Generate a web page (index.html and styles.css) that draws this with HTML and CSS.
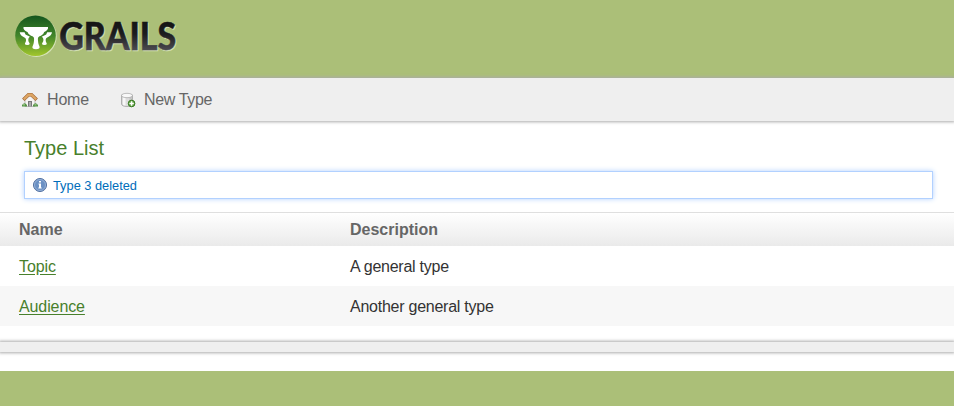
FILE: index.html
```
<!DOCTYPE html>
<html lang="en">
<head>
<meta charset="utf-8">
<title>Type List</title>
<link rel="stylesheet" href="styles.css">
</head>
<body>
<header class="banner">
  <svg class="logo" width="200" height="78" viewBox="0 0 200 78" role="img" aria-label="Grails">
    <defs>
      <linearGradient id="disc" x1="0" y1="0" x2="0" y2="1"><stop offset="0" stop-color="#14551d"/><stop offset=".5" stop-color="#41852a"/><stop offset="1" stop-color="#a2c62c"/></linearGradient>
      <linearGradient id="ink" gradientUnits="userSpaceOnUse" x1="0" y1="23" x2="0" y2="50"><stop offset="0" stop-color="#151515"/><stop offset=".4" stop-color="#1c1c1e"/><stop offset="1" stop-color="#4b4a4f"/></linearGradient>
    </defs>
    <circle cx="36.300" cy="36.500" r="20.400" fill="#d6e3b8"/>
    <circle cx="35.500" cy="35.700" r="20.300" fill="url(#disc)"/>
    <path fill="#fff" d="M23.500 27H48V28.500C47.300 30.500 45.500 31.300 44.200 32C43.300 34.500 41.500 35.700 39.500 36.300C38 37 37.700 38.500 38 40.500C38.200 43 38.500 44.500 39.500 46.500C40 48.300 39 49.200 36 49.200S32 48.300 32.500 46.500C33.500 44.500 33.800 43 34 40.500C34.300 38.500 34 37 32.500 36.300C30.500 35.700 28.500 34.500 27.500 32C26 31.300 24.200 30.500 23.500 28.500Z"/>
    <path fill="#fff" d="M19.700 32.300H24.500L25.500 34.500L30 36.700C29 37.500 28.300 38 28.300 39.800C28.300 41.500 28.800 42 29.700 43.500Q29.800 45 27.300 45T24.900 43.500C25.700 42 26 41.300 26 40C26 38.500 25.200 38 24 37.300C21.500 36.300 20 34.500 19.700 32.300Z"/>
    <path fill="#fff" d="M52 32.300H47.200L46.200 34.500L41.700 36.700C42.700 37.500 43.400 38 43.400 39.800C43.400 41.500 42.900 42 42 43.500Q41.900 45 44.400 45T46.800 43.500C46 42 45.700 41.300 45.700 40C45.700 38.500 46.500 38 47.700 37.300C50.200 36.300 51.700 34.500 52 32.300Z"/>
    <text class="wordmark wordmark-edge" x="60.200" y="50.800" textLength="117" lengthAdjust="spacingAndGlyphs" aria-hidden="true">GRAILS</text>
    <text class="wordmark" x="59.200" y="49.900" textLength="117" lengthAdjust="spacingAndGlyphs">GRAILS</text>
  </svg>
</header>
<nav class="nav">
  <a class="nav-item" href="#">
    <svg width="16" height="16" viewBox="0 0 16 16" aria-hidden="true">
      <path fill="#f5f3f1" stroke="#a9a5a3" stroke-width=".7" d="M3 8L8 3.500L13 8V14.500H3Z"/>
      <path fill="#777779" d="M6 9H10V14.500H6Z"/><path fill="#a9a9ac" d="M7 10H9V14.500H7Z"/>
      <path fill="none" stroke="#9f6534" stroke-width="3.400" d="M1.300 7.800L6.500 2.800H9.500L14.700 7.800"/>
      <path fill="none" stroke="#dda563" stroke-width="2.400" d="M1.800 7.300L6.500 2.800H9.500L14.200 7.300"/>
      <path fill="#519344" d="M0 13Q2.500 9.500 5 13V14.500H0ZM11 13Q13.500 9.500 16 13V14.500H11Z"/>
      <path fill="#91bd7a" d="M1 12H3V13.500H1ZM12.500 12H14.500V13.500H12.500Z"/>
    </svg>
    <span class="home-label">Home</span>
  </a>
  <a class="nav-item" href="#">
    <svg width="16" height="16" viewBox="0 0 16 16" aria-hidden="true">
      <path fill="#dcdcdc" stroke="#a2a2a2" stroke-width=".8" d="M1.500 3V12Q2 14.500 7 14.500T12.500 12V3Z"/>
      <path fill="#f7f7f7" d="M3 5H5.500V13.500L3 13Z"/><path fill="#c5c5c5" d="M9.500 5H12V10H9.500Z"/>
      <ellipse cx="7" cy="3.500" rx="5.500" ry="2.200" fill="#f8f8f8" stroke="#acacac" stroke-width=".8"/>
      <circle cx="11.600" cy="11.500" r="3.300" fill="#63a344" stroke="#34791f"/>
      <path stroke="#fff" stroke-width="1.500" d="M11.600 9.300V13.700M9.400 11.500H13.800"/>
    </svg>
    <span class="create-label">New Type</span>
  </a>
</nav>
<main>
  <h1 class="title">Type List</h1>
  <div class="message" role="status">
    <svg width="16" height="16" viewBox="0 0 16 16" aria-hidden="true">
      <circle cx="8" cy="8" r="6.500" fill="#6b91c4" stroke="#506e9f"/>
      <circle cx="8" cy="8" r="5.500" fill="none" stroke="#9eb7da" stroke-width=".8"/>
      <path fill="#fff" d="M7 4H9V5.500H7ZM6.500 6.500H9V10.500H9.700V11.500H6.300V10.500H7V7.500H6.500Z"/>
    </svg>
    <span class="message-text">Type 3 deleted</span>
  </div>
  <table class="list">
    <thead><tr><th class="name-column">Name</th><th>Description</th></tr></thead>
    <tbody>
      <tr><td><a href="#">Topic</a></td><td>A general type</td></tr>
      <tr><td><a href="#">Audience</a></td><td>Another general type</td></tr>
    </tbody>
  </table>
  <div class="pagination"></div>
</main>
<footer class="footer"></footer>
</body>
</html>
```
FILE: styles.css
```
* { box-sizing: border-box; }
body {
  margin: 0;
  background: #fff;
  color: #333;
  font: 16px/20px "Liberation Sans", Arial, sans-serif;
  overflow: hidden;
}
.banner { height: 78px; background: #abbf78; }
.logo { display: block; }
.wordmark { font: 900 37px Lato, sans-serif; fill: url(#ink); stroke: url(#ink); stroke-width: .5px; }
.wordmark-edge { fill: #d3e0b5; stroke: #d3e0b5; }
.nav {
  display: flex;
  gap: 31px;
  height: 43px;
  padding: 0 22px;
  background: #efefef;
  box-shadow: 0 0 3px 1px #aaa;
  position: relative;
}
.nav-item { display: flex; align-items: center; gap: 9px; color: #666; text-decoration: none; }
.nav-item svg { display: block; }
.home-label { letter-spacing: -.17px; }
.create-label { margin-left: -1px; letter-spacing: -.36px; }
.title { margin: 15px 24px 10px; height: 25px; color: #48802c; font-size: 20px; line-height: 25px; font-weight: 400; }
.message {
  display: flex;
  align-items: center;
  gap: 5px;
  height: 28px;
  margin: 0 21px 13px 24px;
  padding-left: 7px;
  border: 1px solid #b2d1ff;
  background: #fff;
  box-shadow: 0 0 5px #b2d1ff;
  color: #006dba;
  font-size: 12.8px;
}
.message-text { padding-top: 1px; }
.list { width: 100%; border-collapse: separate; border-spacing: 0; table-layout: fixed; border-top: 1px solid #dfdfdf; margin-bottom: 16px; }
.list th, .list td { height: 40px; padding: 2px 12px 0 19px; text-align: left; vertical-align: middle; }
.list th { height: 33px; padding-top: 0; color: #666; }
.list td:first-child { letter-spacing: -.1px; }
.list td:last-child { letter-spacing: -.25px; }
.list thead tr { background: linear-gradient(#fff, #eaeaea); }
.list tbody tr:nth-child(even) { background: #f7f7f7; }
.list a { color: #48802c; text-underline-offset: 2px; }
.name-column { width: 331px; }
.pagination { height: 10px; background: #efefef; box-shadow: 0 0 3px 1px #aaa; }
.footer { height: 35px; margin-top: 19px; background: #abbf78; }
```
